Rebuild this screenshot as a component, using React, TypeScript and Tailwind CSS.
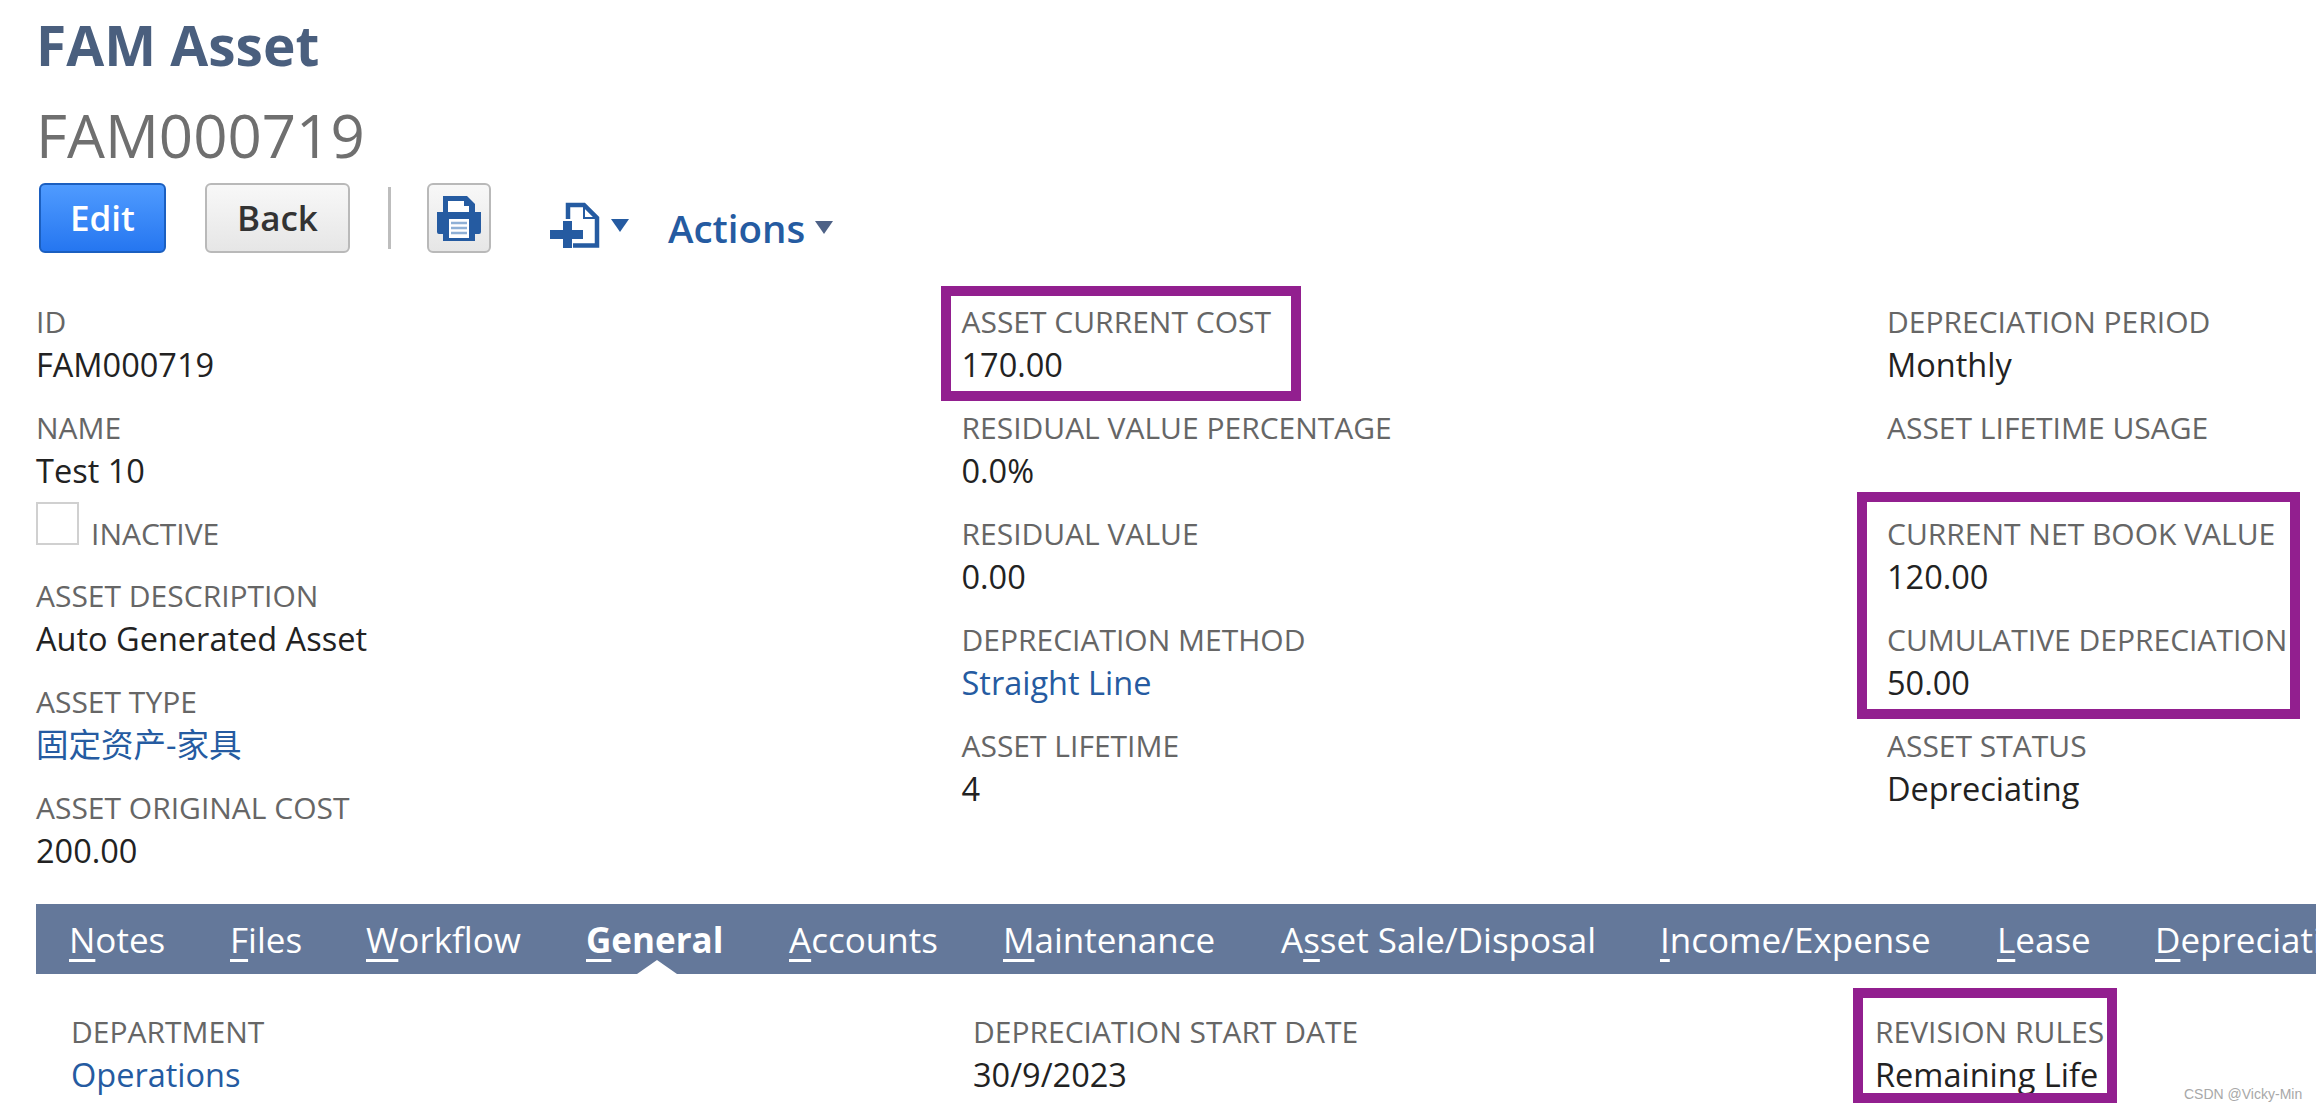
const navy = 'text-[#255ba1]'

const columns = [
  [
    { label: 'ID', value: 'FAM000719' },
    { label: 'NAME', value: 'Test 10' },
    { label: 'INACTIVE', checkbox: true },
    { label: 'ASSET DESCRIPTION', value: 'Auto Generated Asset' },
    { label: 'ASSET TYPE', value: '固定资产-家具', link: true },
    { label: 'ASSET ORIGINAL COST', value: '200.00' },
  ],
  [
    { label: 'ASSET CURRENT COST', value: '170.00' },
    { label: 'RESIDUAL VALUE PERCENTAGE', value: '0.0%' },
    { label: 'RESIDUAL VALUE', value: '0.00' },
    { label: 'DEPRECIATION METHOD', value: 'Straight Line', link: true },
    { label: 'ASSET LIFETIME', value: '4' },
  ],
  [
    { label: 'DEPRECIATION PERIOD', value: 'Monthly' },
    { label: 'ASSET LIFETIME USAGE' },
    { label: 'CURRENT NET BOOK VALUE', value: '120.00' },
    { label: 'CUMULATIVE DEPRECIATION', value: '50.00' },
    { label: 'ASSET STATUS', value: 'Depreciating' },
  ],
]

const tabs = [
  { key: 'N', rest: 'otes', w: 'w-[161px]' },
  { key: 'F', rest: 'iles', w: 'w-[136px]' },
  { key: 'W', rest: 'orkflow', w: 'w-[220px]' },
  { key: 'G', rest: 'eneral', w: 'w-[203px]', active: true },
  { key: 'A', rest: 'ccounts', w: 'w-[214px]' },
  { key: 'M', rest: 'aintenance', w: 'w-[278px]' },
  { pre: 'A', key: 's', rest: 'set Sale/Disposal', w: 'w-[379px]' },
  { key: 'I', rest: 'ncome/Expense', w: 'w-[337px]' },
  { key: 'L', rest: 'ease', w: 'w-[158px]' },
  { key: 'D', rest: 'epreciation', w: 'w-[200px]' },
]

type FieldProps = {
  label: string
  value?: string
  link?: boolean
  checkbox?: boolean
}

function Field({ label, value, link, checkbox }: FieldProps) {
  if (checkbox) {
    return (
      <div className="h-[62px] flex items-start">
        <div className="w-[43px] h-[43px] border-2 border-[#d0d0d0] bg-white mt-[-9px]" />
        <span className="text-[#666] text-[30px] leading-[44px] ml-[12px] mt-[1px]">{label}</span>
      </div>
    )
  }
  return (
    <div className="h-[106px]">
      <div className="text-[#666] text-[30px] leading-[46px]">{label}</div>
      <div className={`text-[32.5px] leading-[40px] ${link ? navy : 'text-[#222]'}`}>{value}</div>
    </div>
  )
}

function PrintIcon() {
  return (
    <svg viewBox="0 0 48 46" className="w-[48px] h-[46px]" fill="#255ba1">
      <path d="M8 1h24l8 8v9H8z" />
      <path d="M13 6h16v5h5v7H13z" fill="#fff" />
      <path d="M2 17h44v20a2 2 0 0 1-2 2h-4v7H8v-7H4a2 2 0 0 1-2-2z" />
      <rect x="14" y="24" width="20" height="19" fill="#fff" />
      <path d="M16 28h16M16 33h16M16 38h16" stroke="#8fb0d6" strokeWidth="2.500" />
    </svg>
  )
}

function NewDocIcon() {
  return (
    <svg viewBox="0 0 52 46" className="w-[52px] h-[46px]" fill="none">
      <path d="M19 17V3h16l13 13v27.500H24" stroke="#255ba1" strokeWidth="4.500" />
      <path d="M35 3v13h13" stroke="#255ba1" strokeWidth="2" />
      <path d="M14 19h9v9h11v9H23v9h-9v-9H1v-9h13z" fill="#255ba1" />
    </svg>
  )
}

function Caret({ color }: { color: string }) {
  return (
    <svg viewBox="0 0 18 13" className="w-[18px] h-[13px]" fill={color}>
      <path d="M0 0h18L9 13z" />
    </svg>
  )
}

function Annotation({ className }: { className: string }) {
  return <div className={`absolute border-[10px] border-[#921f8f] ${className}`} />
}

export default function App() {
  return (
    <div className="relative w-[2316px] h-[1110px] overflow-hidden bg-white font-['Open_Sans','Noto_Sans_CJK_SC',sans-serif]">
      <div className="pl-[36px] pt-[13px]">
        <h1 className="text-[#4a5f7e] text-[55px] leading-[64px] font-bold">FAM Asset</h1>
        <h2 className="text-[#6f6f6f] text-[60px] leading-[80px] mt-[18px]">FAM000719</h2>

        {/* toolbar */}
        <div className="flex items-start mt-[8px] ml-[3px] h-[70px]">
          <button className="w-[127px] h-[70px] rounded-[6px] border-2 border-[#1b5fc0] bg-gradient-to-b from-[#4f9bff] to-[#2576f0] text-white text-[35px] font-semibold">
            Edit
          </button>
          <button className="w-[145px] h-[70px] ml-[39px] rounded-[6px] border-2 border-[#b9b9b9] bg-gradient-to-b from-[#f8f8f8] to-[#e6e6e6] text-[#333] text-[35px] font-semibold">
            Back
          </button>
          <div className="w-[3px] h-[62px] bg-[#bdbdbd] ml-[38px] mt-[4px]" />
          <button className="w-[64px] h-[70px] ml-[36px] rounded-[6px] border-2 border-[#b9b9b9] bg-gradient-to-b from-[#f8f8f8] to-[#e6e6e6] flex items-center justify-center">
            <PrintIcon />
          </button>
          <div className="ml-[58px] mt-[19px]">
            <NewDocIcon />
          </div>
          <div className="ml-[10px] mt-[36px]">
            <Caret color="#255ba1" />
          </div>
          <span className={`ml-[39px] mt-[20px] text-[38.500px] leading-[50px] font-semibold ${navy}`}>Actions</span>
          <div className="ml-[10px] mt-[38px]">
            <Caret color="#4e6287" />
          </div>
        </div>

        {/* main fields */}
        <div className="flex mt-[46px] h-[605px]">
          {columns.map((fields, i) => (
            <div key={i} className="w-[925.5px] shrink-0">
              {fields.map((f) => (
                <Field key={f.label} {...f} />
              ))}
            </div>
          ))}
        </div>

        {/* tabs */}
        <div className="flex h-[70px] bg-[#64789a] pl-[33px] overflow-hidden text-white text-[35px] leading-[72px] whitespace-nowrap">
          {tabs.map((t) => (
            <div key={t.key + t.rest} className={`relative shrink-0 ${t.w} ${t.active ? 'font-bold' : ''}`}>
              {t.pre}
              <span className="underline underline-offset-[6px]">{t.key}</span>
              {t.rest}
              {t.active && (
                <div className="absolute left-[51px] bottom-0 w-0 h-0 border-x-[20px] border-x-transparent border-b-[14px] border-b-white" />
              )}
            </div>
          ))}
        </div>

        {/* general tab */}
        <div className="flex pl-[35px] pt-[35px]">
          <div className="w-[902px]">
            <Field label="DEPARTMENT" value="Operations" link />
          </div>
          <div className="w-[902px]">
            <Field label="DEPRECIATION START DATE" value="30/9/2023" />
          </div>
          <Field label="REVISION RULES" value="Remaining Life" />
        </div>
      </div>

      <Annotation className="left-[941px] top-[286px] w-[360px] h-[115px]" />
      <Annotation className="left-[1857px] top-[492px] w-[443px] h-[227px]" />
      <Annotation className="left-[1853px] top-[988px] w-[264px] h-[115px]" />

      <div className="absolute left-[2184px] top-[1084px] text-[#a8a8a8] text-[14px] font-['Liberation_Sans',sans-serif]">
        CSDN @Vicky-Min
      </div>
    </div>
  )
}
